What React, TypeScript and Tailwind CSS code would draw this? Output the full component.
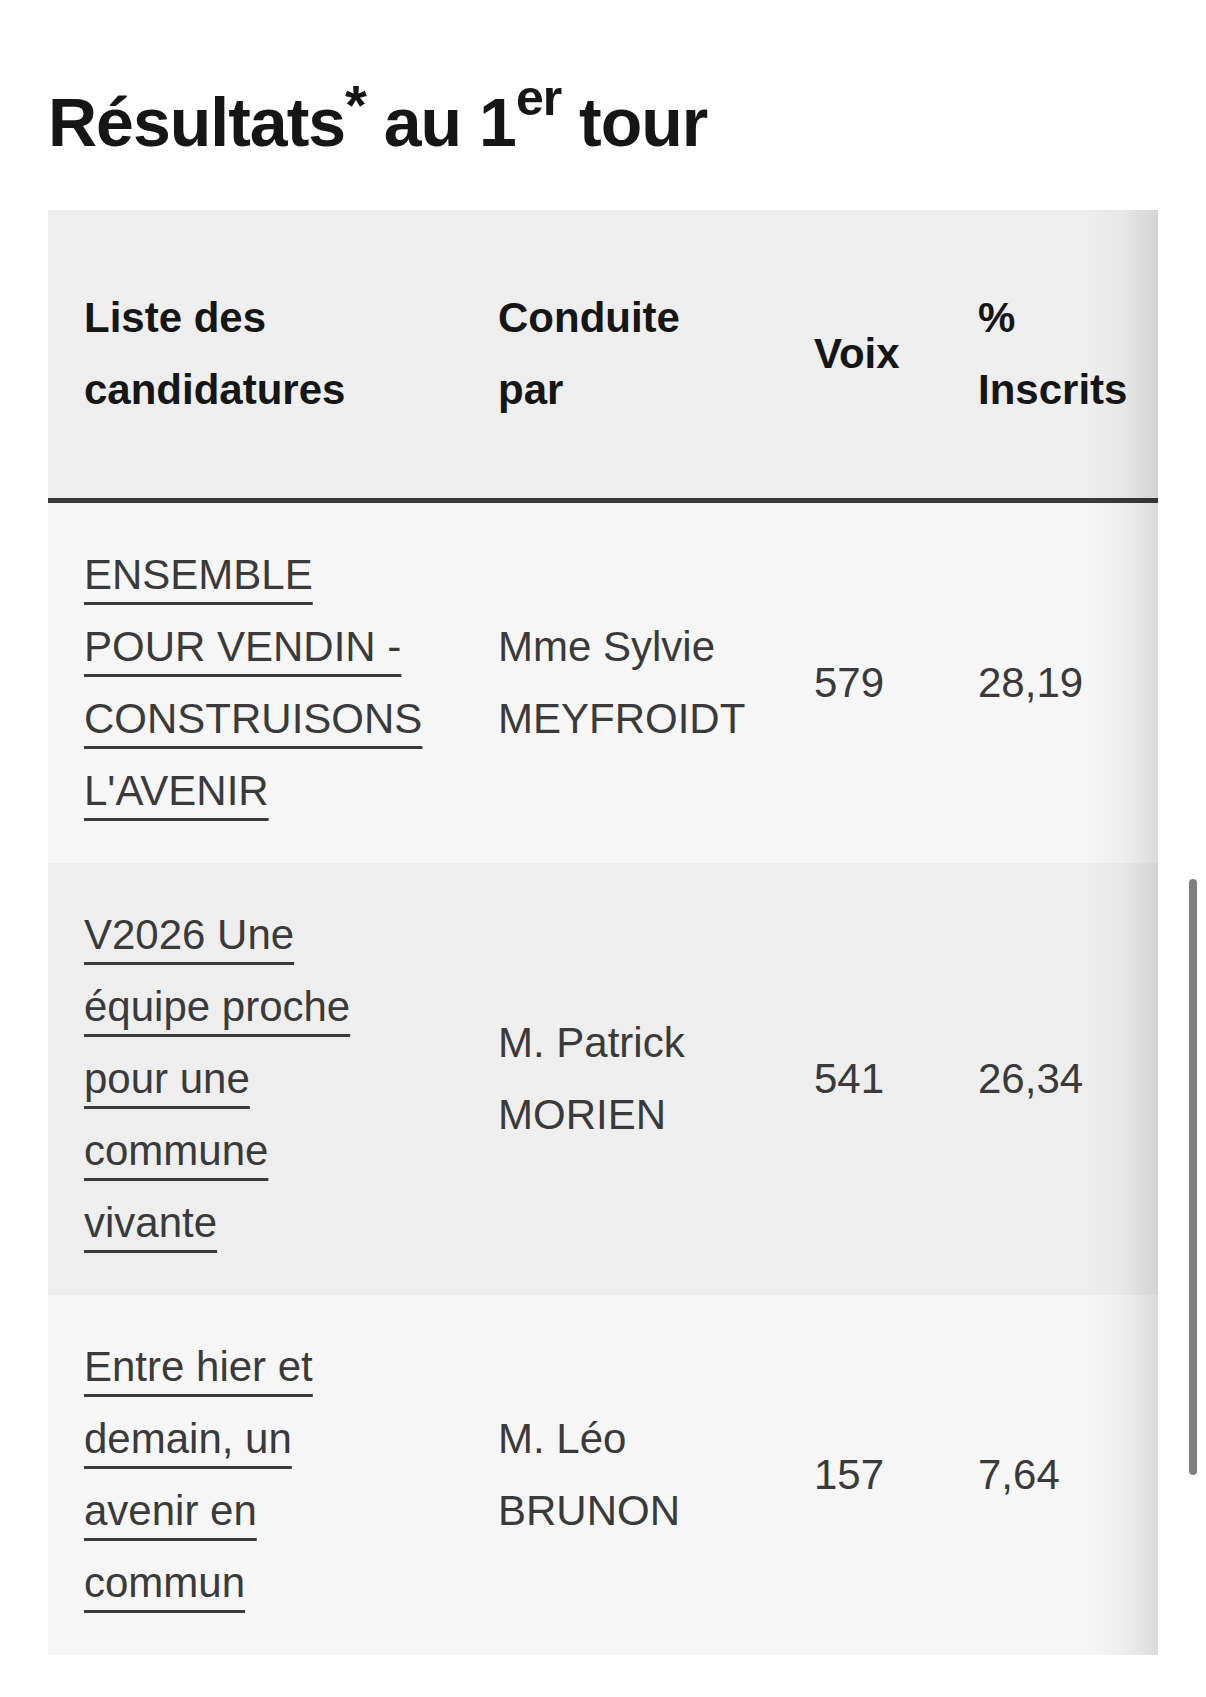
import React from 'react';

const rows = [
  {
    list: ['ENSEMBLE', 'POUR VENDIN -', 'CONSTRUISONS', "L'AVENIR"],
    lead: ['Mme Sylvie', 'MEYFROIDT'],
    votes: '579',
    pct: '28,19',
    bg: 'bg-[#f6f6f6]',
  },
  {
    list: ['V2026 Une', 'équipe proche', 'pour une', 'commune', 'vivante'],
    lead: ['M. Patrick', 'MORIEN'],
    votes: '541',
    pct: '26,34',
    bg: 'bg-[#eeeeee]',
  },
  {
    list: ['Entre hier et', 'demain, un', 'avenir en', 'commun'],
    lead: ['M. Léo', 'BRUNON'],
    votes: '157',
    pct: '7,64',
    bg: 'bg-[#f6f6f6]',
  },
];

const cols = 'grid grid-cols-[414px_316px_164px_216px] items-center';

export default function App() {
  return (
    <div className="relative w-[1206px] h-[1697px] bg-white overflow-hidden font-['Liberation_Sans',Arial,sans-serif]">
      <div className="px-[48px] pt-[73px]">
        {/* TITLE */}
        <h2 className="text-[68px] leading-[80px] font-bold text-[#161616] tracking-[-1px] whitespace-nowrap">
          Résultats<span className="text-[56px] leading-none align-[22px]">*</span> au 1
          <span className="text-[50px] leading-none align-[31px]">er</span> tour
        </h2>

        {/* TABLE */}
        <div className="relative mt-[48px] w-[1110px]">
          <div className={`${cols} bg-[#eeeeee] border-b-[5px] border-[#3a3a3a] text-[42px] leading-[72px] font-bold text-[#161616]`}>
            <div className="px-[36px] py-[72px]">Liste des<br />candidatures</div>
            <div className="px-[36px] py-[72px]">Conduite<br />par</div>
            <div className="px-[36px]">Voix</div>
            <div className="px-[36px] whitespace-nowrap">%<br />Inscrits</div>
          </div>

          {rows.map((r, i) => (
            <div key={i} className={`${cols} ${r.bg} text-[42px] leading-[72px] text-[#3a3a3a]`}>
              <div className="px-[36px] py-[36px] whitespace-nowrap">
                {r.list.map((line, j) => (
                  <React.Fragment key={j}>
                    <span className="underline decoration-[3px] underline-offset-[13px] decoration-[#3a3a3a]">{line}</span>
                    {j < r.list.length - 1 && <br />}
                  </React.Fragment>
                ))}
              </div>
              <div className="px-[36px] whitespace-nowrap">
                {r.lead[0]}<br />{r.lead[1]}
              </div>
              <div className="px-[36px]">{r.votes}</div>
              <div className="px-[36px]">{r.pct}</div>
            </div>
          ))}

          {/* scroll shadow */}
          <div className="absolute top-0 right-0 bottom-0 w-[72px] bg-gradient-to-r from-transparent via-black/[0.03] to-black/[0.11] pointer-events-none" />
        </div>
      </div>

      {/* scrollbar */}
      <div className="absolute left-[1189px] top-[879px] w-[8px] h-[596px] rounded-full bg-[#808080]" />
    </div>
  );
}
